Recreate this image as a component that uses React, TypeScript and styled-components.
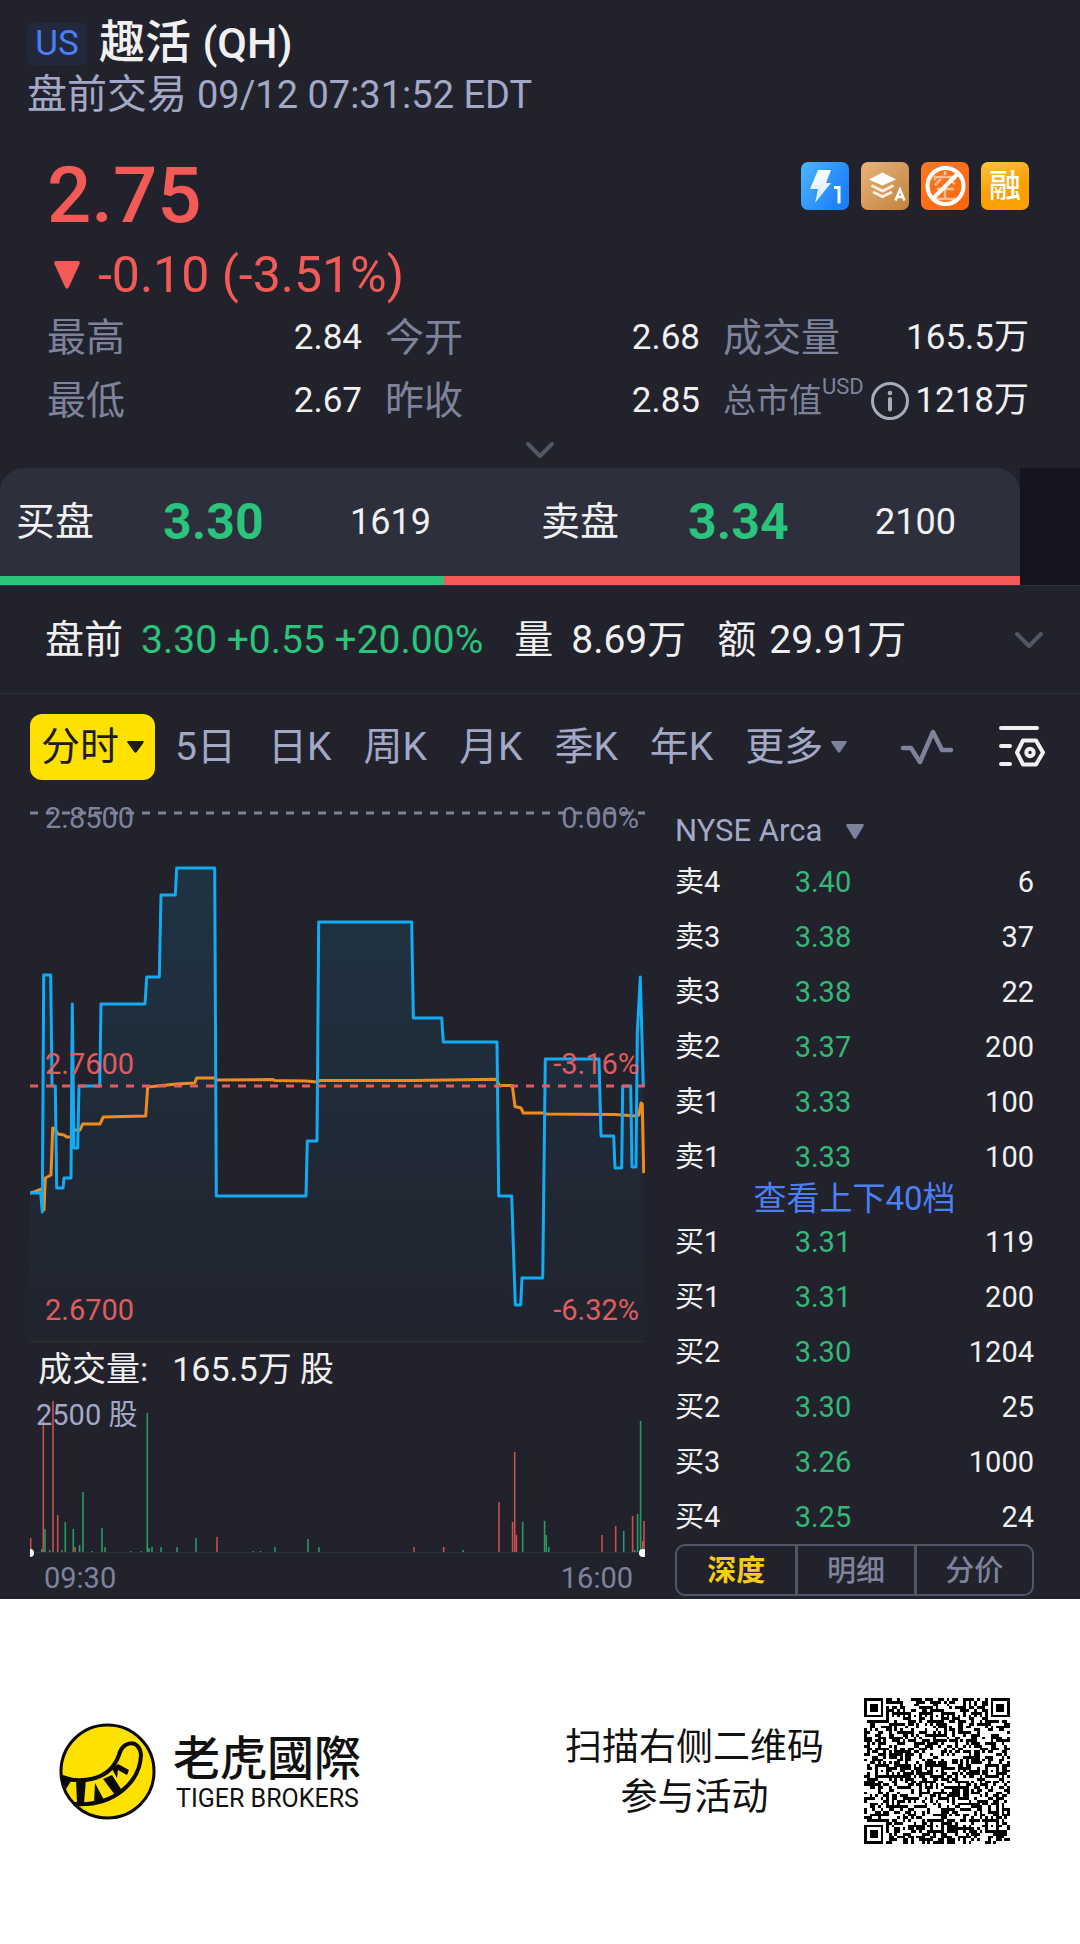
import React from 'react';
import styled, { createGlobalStyle } from 'styled-components';

const c = {
  panel: '#21222b',
  raised: '#2d2f3d',
  side: '#15161d',
  line: '#2e303c',
  text: '#f0f0f0',
  soft: '#a3a8c6',
  muted: '#7e829b',
  dim: '#535666',
  red: '#f25a57',
  green: '#2bc47c',
  blue: '#4a7ff5',
  yellow: '#ffe100',
};

const GlobalStyle = createGlobalStyle`
  *, *::before, *::after { box-sizing: border-box; }
  body { margin: 0; background: #fff; }
  button { border: 0; padding: 0; background: none; color: inherit; font: inherit; cursor: pointer; }
  svg { display: block; flex: none; }
`;

const Page = styled.div`
  font-family: Roboto, 'Noto Sans CJK SC', sans-serif;
  font-size: 38px;
  line-height: 48px;
  color: ${c.text};
`;

const Panel = styled.main`
  background: ${c.panel};
  padding-top: 14px;
`;

const Num = styled.span<{ $size?: number }>`
  font-size: ${(p) => p.$size ?? 36}px;
`;

/* ---------- header ---------- */

const Header = styled.header`
  padding: 0 27px;
`;

const TitleRow = styled.div`
  display: flex;
  align-items: center;
  gap: 12px;
  height: 56px;
`;

const Market = styled.span`
  display: flex;
  align-items: center;
  justify-content: center;
  width: 60px;
  height: 42px;
  margin-top: 4px;
  border-radius: 6px;
  background: #22293d;
  color: ${c.blue};
  font-size: 35px;
`;

const Title = styled.h1`
  margin: 0;
  font-size: 46px;
  line-height: 56px;
  font-weight: 500;
`;

const Session = styled.p`
  margin: 0;
  color: ${c.soft};
  font-size: 40px;
  line-height: 50px;
`;

/* ---------- quote ---------- */

const Quote = styled.section`
  padding: 28px 51px 0 47px;
`;

const PriceRow = styled.div`
  display: flex;
  justify-content: space-between;
  align-items: flex-start;
`;

const Price = styled.div`
  color: ${c.red};
  font-size: 78px;
  line-height: 96px;
  font-weight: 500;
`;

const Badges = styled.div`
  display: flex;
  gap: 12px;
  padding-top: 14px;
`;

const Change = styled.div`
  display: flex;
  align-items: center;
  gap: 18px;
  padding-left: 7px;
  color: ${c.red};
  font-size: 50px;
  line-height: 62px;
`;

const Stats = styled.dl`
  display: grid;
  grid-template-columns: 315fr 315fr 306fr;
  column-gap: 23px;
  margin: 0;
`;

const Stat = styled.div`
  display: flex;
  align-items: center;
  justify-content: space-between;
  height: 63px;
  white-space: nowrap;

  dt { display: flex; align-items: center; color: ${c.muted}; font-size: 39px; }
  dd { margin: 0; font-size: 35px; }
`;

const SmallLabel = styled.span`
  font-size: 33px;
`;

const Unit = styled.sup`
  align-self: flex-start;
  font-size: 22px;
  line-height: 20px;
  margin-right: 6px;
`;

const Expand = styled.button`
  display: flex;
  align-items: center;
  justify-content: center;
  width: 100%;
  height: 36px;
`;

/* ---------- best bid / ask ---------- */

const BookTop = styled.section`
  background: linear-gradient(90deg, ${c.panel} calc(100% - 60px), ${c.side} calc(100% - 60px));
  padding-right: 60px;
`;

const BidAsk = styled.div`
  border-radius: 24px 24px 0 0;
  background: ${c.raised};
  overflow: hidden;
`;

const BidAskRow = styled.div`
  display: grid;
  grid-template-columns: 147fr 187fr 191fr 147fr 187fr 145fr;
  align-items: center;
  height: 108px;
  padding-left: 16px;
  font-size: 39px;
`;

const BestPrice = styled.span`
  color: ${c.green};
  font-size: 50px;
  font-weight: 700;
`;

const Ratio = styled.div`
  display: grid;
  grid-template-columns: 444fr 576fr;
  height: 9px;
`;

const RatioPart = styled.span<{ $color: string }>`
  background: ${(p) => p.$color};
`;

const PreMarket = styled.section`
  display: flex;
  align-items: center;
  justify-content: space-between;
  height: 109px;
  padding: 0 36px 0 45px;
  border: solid ${c.line};
  border-width: 1px 0;
  white-space: nowrap;
`;

const PreText = styled.div`
  display: flex;
  gap: 31px;
  font-size: 39px;
`;

const Pair = styled.span<{ $gap: number }>`
  display: flex;
  gap: ${(p) => p.$gap}px;
`;

const Up = styled.span`
  color: ${c.green};
`;

/* ---------- period tabs ---------- */

const Tabs = styled.nav`
  display: flex;
  align-items: center;
  height: 106px;
  padding: 0 34px 0 30px;
  color: ${c.soft};
  font-size: 39px;
  white-space: nowrap;
`;

const ActiveTab = styled.button`
  display: flex;
  align-items: center;
  justify-content: center;
  gap: 8px;
  width: 125px;
  height: 66px;
  margin-right: 20px;
  border-radius: 12px;
  background: ${c.yellow};
  color: #1c1c1c;
`;

const TabList = styled.div`
  display: flex;
  gap: 32px;
  flex: 1;
`;

const Tab = styled.button`
  display: flex;
  align-items: center;
  gap: 8px;
`;

const Tools = styled.div`
  display: flex;
  align-items: center;
  gap: 44px;
`;

/* ---------- chart and order book ---------- */

const Body = styled.div`
  display: grid;
  grid-template-columns: 615fr 359fr;
  column-gap: 30px;
  padding: 0 46px 3px 30px;
`;

const Charts = styled.section`
  min-width: 0;
`;

const PlotBox = styled.div<{ $height: number }>`
  position: relative;
  height: ${(p) => p.$height}px;

  svg { width: 100%; height: 100%; }
`;

const PriceBox = styled(PlotBox)`
  border-bottom: 1px solid ${c.line};
`;

const Mark = styled.span<{ $top: number; $right?: boolean; $color: string }>`
  position: absolute;
  top: ${(p) => p.$top}px;
  ${(p) => (p.$right ? 'right: 6px;' : 'left: 15px;')}
  color: ${(p) => p.$color};
  font-size: 29px;
  line-height: 36px;
`;

const VolumeTitle = styled.div`
  display: flex;
  gap: 24px;
  padding-left: 8px;
  font-size: 34px;
  line-height: 54px;
`;

const VolumeMark = styled.span`
  position: absolute;
  top: 1px;
  left: 6px;
  color: ${c.soft};
  font-size: 29px;
  line-height: 36px;
`;

const Axis = styled.div`
  display: flex;
  justify-content: space-between;
  padding: 0 12px 0 14px;
  color: ${c.muted};
  font-size: 29px;
  line-height: 36px;
`;

const Book = styled.section`
  padding-top: 8px;
`;

const Venue = styled.button`
  display: flex;
  align-items: center;
  gap: 24px;
  height: 46px;
  color: ${c.soft};
  font-size: 31px;
`;

const Levels = styled.table`
  width: 100%;
  border-collapse: collapse;
  table-layout: fixed;
  font-size: 29px;
  line-height: 36px;

  th, td { height: 55px; padding: 0; text-align: left; font-weight: 400; }
  td:nth-child(2) { color: #35b877; }
  td:last-child { text-align: right; }
`;

const MoreLevels = styled.a`
  display: block;
  height: 30px;
  color: ${c.blue};
  font-size: 33px;
  line-height: 30px;
  text-align: center;
  text-decoration: none;
`;

const BookTabs = styled.div`
  display: grid;
  grid-template-columns: repeat(3, 1fr);
  height: 52px;
  border: 2px solid ${c.dim};
  border-radius: 10px;
`;

const BookTab = styled.button<{ $on?: boolean }>`
  padding-top: 2px;
  color: ${(p) => (p.$on ? '#f7cb14' : c.muted)};
  font-size: 29px;
  line-height: 40px;
  font-weight: ${(p) => (p.$on ? 700 : 500)};

  & + & { border-left: 3px solid ${c.dim}; }
`;

/* ---------- footer ---------- */

const Footer = styled.footer`
  display: flex;
  align-items: center;
  justify-content: space-between;
  padding: 99px 70px 100px 59px;
  background: #fff;
  color: #111;
`;

const Brand = styled.div`
  display: flex;
  align-items: center;
  gap: 17px;
`;

const BrandName = styled.div`
  font-family: Roboto, 'Noto Sans CJK TC', sans-serif;
  padding-top: 3px;
  font-size: 47px;
  line-height: 52px;
  font-weight: 500;
`;

const BrandLatin = styled.div`
  padding-left: 3px;
  font-size: 25px;
  line-height: 28px;
`;

const Invite = styled.div`
  display: flex;
  align-items: center;
  gap: 40px;
`;

const InviteText = styled.p`
  margin: 0;
  padding-top: 4px;
  font-size: 37px;
  line-height: 50px;
  text-align: center;
`;

/* ---------- drawings ---------- */

const Chevron = () => (
  <svg width="30" height="18" viewBox="0 0 30 18" fill="none" stroke={c.dim} strokeWidth="4" strokeLinecap="round" strokeLinejoin="round">
    <path d="M3 3l12 12L27 3" />
  </svg>
);

const Triangle = ({ w, h, color }: { w: number; h: number; color: string }) => (
  <svg width={w} height={h} viewBox="0 0 20 16" preserveAspectRatio="none" fill={color}>
    <path d="M1.5 0h17Q20.5 0 19.5 2L11.500 14.800Q10 16.800 8.500 14.800L.5 2Q-.5 0 1.500 0z" />
  </svg>
);

const InfoIcon = () => (
  <svg width="40" height="40" viewBox="0 0 40 40" fill="none" stroke="#a9abb8" strokeWidth="3" role="img" aria-label="说明">
    <circle cx="20" cy="20" r="17.500" />
    <path d="M20 18v10.500" strokeWidth="4" strokeLinecap="round" />
    <circle cx="20" cy="12" r="2.300" fill="#a9abb8" stroke="none" />
  </svg>
);

const FlashBadge = () => (
  <svg width="48" height="48" viewBox="0 0 48 48">
    <defs>
      <linearGradient id="flash" x1="0" y1="0" x2="1" y2=".6">
        <stop offset="0" stopColor="#4db5fb" />
        <stop offset="1" stopColor="#1a7ffb" />
      </linearGradient>
      <linearGradient id="bolt" x1="0" y1="0" x2="0" y2="1">
        <stop offset="0" stopColor="#fff" />
        <stop offset="1" stopColor="#cfe6ff" />
      </linearGradient>
    </defs>
    <rect width="48" height="48" rx="7" fill="url(#flash)" />
    <path d="M17 8h13l-5 13h5L14 41l3-14H9z" fill="url(#bolt)" />
    <path d="M33 25.500h5v16" fill="none" stroke="#fff" strokeWidth="3" />
  </svg>
);

const LayersBadge = () => (
  <svg width="48" height="48" viewBox="0 0 48 48">
    <defs>
      <linearGradient id="layers" x1="0" y1="0" x2="1" y2="1">
        <stop offset="0" stopColor="#e9b47c" />
        <stop offset="1" stopColor="#c2823c" />
      </linearGradient>
    </defs>
    <rect width="48" height="48" rx="7" fill="url(#layers)" />
    <path d="M21.500 10.500L35 17.500l-13.500 6L8 17.500z" fill="#fff" />
    <path d="M10.500 23.500l11 5.500 11-5.500M12 30l9.500 4.500L31 30" fill="none" stroke="#ffeedd" strokeWidth="3" />
    <path d="M34.500 38.500l4.500-11 4.500 11M36 35h6" fill="none" stroke="#fff" strokeWidth="2.500" />
  </svg>
);

const NoShortBadge = () => (
  <svg width="48" height="48" viewBox="0 0 48 48">
    <defs>
      <linearGradient id="noshort" x1="0" y1="0" x2="1" y2="1">
        <stop offset="0" stopColor="#fb7a25" />
        <stop offset="1" stopColor="#ff640c" />
      </linearGradient>
    </defs>
    <rect width="48" height="48" rx="7" fill="url(#noshort)" />
    <path d="M24 9v4M14 18v-3h20v3M20 17l-6 6M28 17l6 5M16 27h17M24 27v9M13 37h22" fill="none" stroke="#ffbf90" strokeWidth="2.500" />
    <circle cx="24.500" cy="24" r="18" fill="none" stroke="#fff" strokeWidth="4" />
    <path d="M12 36.500l25-25" stroke="#fff" strokeWidth="4" />
  </svg>
);

const MarginBadge = styled.span`
  display: flex;
  align-items: center;
  justify-content: center;
  width: 48px;
  height: 48px;
  border-radius: 7px;
  background: linear-gradient(160deg, #fdc53f, #f9a003 55%);
  color: #fff;
  font-size: 32px;
  font-weight: 500;
`;

const PulseIcon = () => (
  <svg width="54" height="38" viewBox="0 0 54 38" fill="none" stroke={c.muted} strokeWidth="4.500" strokeLinecap="round" strokeLinejoin="round">
    <path d="M3 20h8l9 14L33 4l9 18h9" />
  </svg>
);

const SettingsIcon = () => (
  <svg width="48" height="44" viewBox="0 0 48 44" fill="none" stroke="#f0f0f0" strokeWidth="4" strokeLinecap="round" strokeLinejoin="round">
    <path d="M3 3h36M3 21h9M3 39h9" />
    <path d="M25 15.500h13l7 12-7 12H25l-6-12z" />
    <circle cx="32" cy="27.500" r="3.700" />
  </svg>
);

const BrandMark = () => (
  <svg width="97" height="97" viewBox="0 0 97 97" role="img" aria-label="老虎國際">
    <defs>
      <clipPath id="disc"><circle cx="48.500" cy="48.500" r="46" /></clipPath>
    </defs>
    <circle cx="48.500" cy="48.500" r="46.500" fill="#ffe100" />
    <g clipPath="url(#disc)">
      <path d="M-2 54C20 60 50 60 60 32C63 17 81 16 82 32C81 58 56 84 15 81" fill="none" stroke="#0a0a0a" strokeWidth="4" />
      <path d="M0 51l14 4-7 11zM17 56h10l-2 25h-7zM36 60l9 17-10 3zM44 56l9-4 9 14-6 6zM53 46l6-5 11 6-2 5-9-5-1 8z" fill="#0a0a0a" />
    </g>
    <circle cx="48.500" cy="48.500" r="46.500" fill="none" stroke="#0a0a0a" strokeWidth="3" />
  </svg>
);

/* A version 9 symbol: 53 modules a side. */
const QR_SIZE = 53;

const qrPath = (() => {
  let seed = 20230912;
  const next = () => {
    seed = (seed + 0x6d2b79f5) | 0;
    let t = Math.imul(seed ^ (seed >>> 15), 1 | seed);
    t = (t + Math.imul(t ^ (t >>> 7), 61 | t)) ^ t;
    return ((t ^ (t >>> 14)) >>> 0) / 4294967296;
  };
  let d = '';
  for (let y = 0; y < QR_SIZE; y += 1) {
    for (let x = 0; x < QR_SIZE; x += 1) {
      let on = next() > 0.5;
      if (x === 6 || y === 6) on = (x + y) % 2 === 0;
      [6, 26, 46].forEach((ay) =>
        [6, 26, 46].forEach((ax) => {
          const dist = Math.max(Math.abs(x - ax), Math.abs(y - ay));
          if (dist <= 2) on = dist !== 1;
        }),
      );
      [[3, 3], [49, 3], [3, 49]].forEach(([fx, fy]) => {
        const dist = Math.max(Math.abs(x - fx), Math.abs(y - fy));
        if (dist <= 4) on = dist < 2 || dist === 3;
      });
      if (on) d += `M${x} ${y}h1v1h-1z`;
    }
  }
  return d;
})();

const QrCode = () => (
  <svg width="146" height="146" viewBox={`0 0 ${QR_SIZE} ${QR_SIZE}`} shapeRendering="crispEdges" role="img" aria-label="二维码">
    <path d={qrPath} fill="#000" />
  </svg>
);

const pricePoints =
  '0,393 10.7,393 12.3,412 13.7,175 20.7,175 22,286 25.3,286 26.7,388 33,388 34,378 41,378 42.3,204 44,348 47.7,348 49,286 69.7,286 71,204 115,204 116.7,177 129.3,177 131,95 145.3,95 146.7,68 184.7,68 186.3,396 276,396 277.3,341 287,341 288.7,122 381.7,122 383.3,218 411.7,218 413.3,242 467,242 468.7,396 481.7,396 485.3,505 490.7,505 492,478 512.7,478 515.3,259 569,259 571,336 583.7,336 585,368 591.7,368 592.7,286 600.7,286 602,367 606,367 607.3,232 610.3,177 613.3,286';

const averagePoints =
  '0,393 4,392 11.7,389 14,410 15.3,378 21,375 22.7,328 25,329 28,334 34,335 36.7,337 41,337 44,330 50,330 52.7,324 70,324 73.3,317 115.7,316 117.7,287 146.7,284 164.7,283 166.7,278 184.7,278 186.7,280 243,279.600 245,280.600 276.7,281 286.7,282 290,280.600 383.3,280.600 466.7,279.300 469.3,285.500 482.3,285.500 485,306.500 491,308 493.3,313 514,313 516.7,314 585,314.400 605,316 609,315 611,303 612.3,304 613.7,373';

type Bar = [x: number, height: number, up: 0 | 1];

const bars: Bar[] = [
  [0.7, 14, 0], [11.7, 3, 1], [13.3, 133, 0], [15, 23, 1], [19.7, 2, 1], [23, 151, 0], [27.7, 37, 0], [32, 2, 1],
  [35.3, 30, 1], [43.3, 23, 1], [45, 5, 0], [49.6, 7, 1], [53, 60, 1], [62, 1, 1], [72, 24, 1], [75, 5, 1],
  [101, 1, 1], [111, 1, 1], [117.3, 139, 1], [119, 4, 1], [122, 5, 1], [131, 5, 1], [147, 5, 1], [166, 14, 1],
  [187, 15, 0], [223, 1, 1], [230.5, 1, 1], [245, 5, 1], [278, 13, 1], [289, 5, 1], [384, 5, 0], [413.6, 5, 0],
  [433, 2, 1], [469, 50, 0], [482.6, 30, 0], [484.7, 100, 0], [486.4, 17, 0], [492.7, 30, 1], [514.6, 31, 1],
  [516.3, 17, 1], [518.8, 5, 1], [572, 17, 0], [585.7, 26, 0], [593.7, 21, 1], [602.6, 36, 0], [604.7, 2, 1],
  [607.6, 38, 1], [610.6, 131, 1], [612.7, 11, 0], [614, 31, 0],
];

const PriceChart = () => (
  <PriceBox $height={542}>
    <svg viewBox="0 0 615 541" preserveAspectRatio="none" fill="none">
      <defs>
        <linearGradient id="area" gradientUnits="userSpaceOnUse" x1="0" y1="60" x2="0" y2="541">
          <stop offset="0" stopColor="#10a8e8" stopOpacity=".13" />
          <stop offset="1" stopColor="#10a8e8" stopOpacity=".01" />
        </linearGradient>
      </defs>
      <polygon points={`${pricePoints} 613.3,541 0,541`} fill="url(#area)" />
      <polyline points={averagePoints} stroke="#f08c1e" strokeWidth="3" strokeLinejoin="round" />
      <polyline points={pricePoints} stroke="#14abf5" strokeWidth="3" strokeLinejoin="round" />
      <path d="M0 13H615" stroke={c.muted} strokeWidth="3" strokeDasharray="8 8" />
      <path d="M0 286H615" stroke="#e05c5e" strokeWidth="3" strokeDasharray="8 8" />
    </svg>
    <Mark $top={0} $color={c.muted}>2.8500</Mark>
    <Mark $top={0} $color={c.muted} $right>0.00%</Mark>
    <Mark $top={246} $color="#e05c5e">2.7600</Mark>
    <Mark $top={246} $color="#e05c5e" $right>-3.16%</Mark>
    <Mark $top={492} $color="#e05c5e">2.6700</Mark>
    <Mark $top={492} $color="#e05c5e" $right>-6.32%</Mark>
  </PriceBox>
);

const VolumeChart = () => (
  <PlotBox $height={164}>
    <VolumeMark>2500 股</VolumeMark>
    <svg viewBox="0 0 615 164" preserveAspectRatio="none">
      <path d="M0 156.500H615" stroke={c.line} />
      {bars.map(([x, h, up]) => (
        <rect key={x} x={x - 0.8} y={156 - h} width="1.600" height={h} fill={up ? '#279b66' : '#c9504f'} />
      ))}
      <circle cx="0" cy="157" r="4" fill="#fff" />
      <circle cx="613" cy="157" r="4" fill="#fff" />
    </svg>
  </PlotBox>
);

type Level = [side: string, price: string, size: string];

const asks: Level[] = [
  ['卖4', '3.40', '6'], ['卖3', '3.38', '37'], ['卖3', '3.38', '22'],
  ['卖2', '3.37', '200'], ['卖1', '3.33', '100'], ['卖1', '3.33', '100'],
];

const bids: Level[] = [
  ['买1', '3.31', '119'], ['买1', '3.31', '200'], ['买2', '3.30', '1204'],
  ['买2', '3.30', '25'], ['买3', '3.26', '1000'], ['买4', '3.25', '24'],
];

const LevelTable = ({ rows }: { rows: Level[] }) => (
  <Levels>
    <tbody>
      {rows.map(([side, price, size], i) => (
        <tr key={i}>
          <th scope="row">{side}</th>
          <td>{price}</td>
          <td>{size}</td>
        </tr>
      ))}
    </tbody>
  </Levels>
);

const periods = ['5日', '日K', '周K', '月K', '季K', '年K'];

export default function App() {
  return (
    <Page lang="zh-CN">
      <GlobalStyle />
      <Panel>
        <Header>
          <TitleRow>
            <Market>US</Market>
            <Title>趣活 <Num $size={43}>(QH)</Num></Title>
          </TitleRow>
          <Session>盘前交易 <Num $size={38}>09/12 07:31:52 EDT</Num></Session>
        </Header>

        <Quote>
          <PriceRow>
            <Price>2.75</Price>
            <Badges>
              <FlashBadge />
              <LayersBadge />
              <NoShortBadge />
              <MarginBadge>融</MarginBadge>
            </Badges>
          </PriceRow>
          <Change>
            <Triangle w={26} h={28} color={c.red} />
            -0.10 (-3.51%)
          </Change>
          <Stats>
            <Stat><dt>最高</dt><dd>2.84</dd></Stat>
            <Stat><dt>今开</dt><dd>2.68</dd></Stat>
            <Stat><dt>成交量</dt><dd>165.5万</dd></Stat>
            <Stat><dt>最低</dt><dd>2.67</dd></Stat>
            <Stat><dt>昨收</dt><dd>2.85</dd></Stat>
            <Stat>
              <dt><SmallLabel>总市值</SmallLabel><Unit>USD</Unit><InfoIcon /></dt>
              <dd>1218万</dd>
            </Stat>
          </Stats>
        </Quote>
        <Expand aria-label="展开"><Chevron /></Expand>

        <BookTop>
          <BidAsk>
            <BidAskRow>
              <span>买盘</span><BestPrice>3.30</BestPrice><Num>1619</Num>
              <span>卖盘</span><BestPrice>3.34</BestPrice><Num>2100</Num>
            </BidAskRow>
            <Ratio><RatioPart $color={c.green} /><RatioPart $color={c.red} /></Ratio>
          </BidAsk>
        </BookTop>

        <PreMarket>
          <PreText>
            <Pair $gap={18}><span>盘前</span><Up>3.30 +0.55 +20.00%</Up></Pair>
            <Pair $gap={18}><span>量</span><span>8.69万</span></Pair>
            <Pair $gap={13}><span>额</span><span>29.91万</span></Pair>
          </PreText>
          <button aria-label="展开盘前"><Chevron /></button>
        </PreMarket>

        <Tabs>
          <ActiveTab>分时<Triangle w={17} h={12} color="#1c1c1c" /></ActiveTab>
          <TabList>
            {periods.map((p) => <Tab key={p}>{p}</Tab>)}
            <Tab>更多<Triangle w={16} h={12} color={c.muted} /></Tab>
          </TabList>
          <Tools>
            <button aria-label="指标"><PulseIcon /></button>
            <button aria-label="设置"><SettingsIcon /></button>
          </Tools>
        </Tabs>

        <Body>
          <Charts>
            <PriceChart />
            <VolumeTitle><span>成交量:</span><span>165.5万 股</span></VolumeTitle>
            <VolumeChart />
            <Axis><span>09:30</span><span>16:00</span></Axis>
          </Charts>
          <Book>
            <Venue>NYSE Arca<Triangle w={18} h={15} color={c.muted} /></Venue>
            <LevelTable rows={asks} />
            <MoreLevels href="#depth">查看上下40档</MoreLevels>
            <LevelTable rows={bids} />
            <BookTabs>
              <BookTab $on>深度</BookTab>
              <BookTab>明细</BookTab>
              <BookTab>分价</BookTab>
            </BookTabs>
          </Book>
        </Body>
      </Panel>

      <Footer>
        <Brand>
          <BrandMark />
          <div>
            <BrandName lang="zh-TW">老虎國際</BrandName>
            <BrandLatin>TIGER BROKERS</BrandLatin>
          </div>
        </Brand>
        <Invite>
          <InviteText>扫描右侧二维码<br />参与活动</InviteText>
          <QrCode />
        </Invite>
      </Footer>
    </Page>
  );
}
